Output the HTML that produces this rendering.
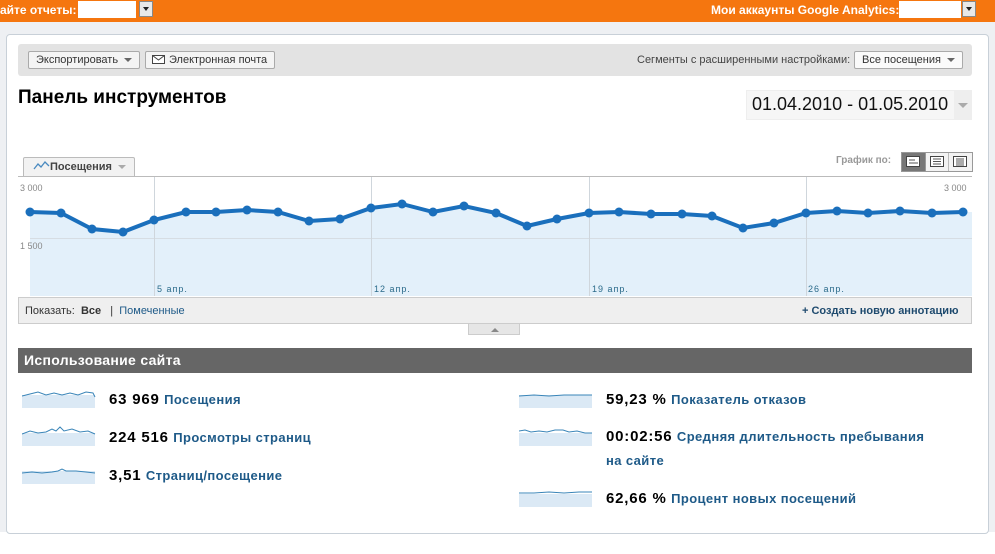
<!DOCTYPE html>
<html><head><meta charset="utf-8"><style>
*{margin:0;padding:0;box-sizing:border-box}
body{width:995px;height:554px;overflow:hidden;background:#fff;font-family:"Liberation Sans",Arial,sans-serif;position:relative}
.a{position:absolute}
.top{left:0;top:0;width:995px;height:22px;background:#f5760f}
.tl{color:#fff;font-weight:bold;font-size:12px;top:3px}
.sel{background:#fff;height:17px;top:1px}
.arr{position:absolute;top:1px;width:14px;height:16px;background:#e8e8e8;border:1px solid #888}
.arr:after{content:"";position:absolute;left:3px;top:5px;border:3px solid transparent;border-top:4px solid #222}
.btn{background:#f4f4f4;border:1px solid #aaa;font-size:11px;color:#333;height:18px;line-height:16px;padding:0 7px;border-radius:2px}
.tri{display:inline-block;border:4px solid transparent;border-top:4px solid #666;vertical-align:-3px;margin-left:6px}
.num{font-weight:bold;font-size:15px;color:#000;letter-spacing:.8px}
.lab{font-weight:bold;font-size:13px;color:#1e5a88;letter-spacing:.4px}
.ax{font-size:9px;color:#2a6a8a;letter-spacing:1px}
</style></head><body>
<div class="a" style="left:0;top:22px;width:995px;height:510px;background:#eef0f3"></div>
<div class="a" style="left:6px;top:34px;width:983px;height:500px;background:#fff;border:1px solid #c8d0d8;border-radius:4px"></div>
<div class="a top"></div>
<div class="a tl" style="left:0">айте отчеты:</div>
<div class="a sel" style="left:78px;width:58px"></div><div class="arr" style="left:139px"></div>
<div class="a tl" style="left:711px">Мои аккаунты Google Analytics:</div>
<div class="a sel" style="left:899px;width:62px"></div><div class="arr" style="left:962px"></div>

<div class="a" style="left:18px;top:44px;width:954px;height:32px;background:#e3e3e3;border-radius:3px"></div>
<div class="a btn" style="left:28px;top:51px">Экспортировать<span class="tri"></span></div>
<div class="a btn" style="left:145px;top:51px;padding-left:6px"><svg width="13" height="9" style="vertical-align:-1px;margin-right:4px"><rect x=".5" y=".5" width="12" height="8" fill="#fff" stroke="#444"/><path d="M.5 .5 6.5 5 12.5 .5" fill="none" stroke="#444"/></svg>Электронная почта</div>
<div class="a" style="left:637px;top:54px;font-size:11px;color:#444">Сегменты с расширенными настройками:</div>
<div class="a btn" style="left:854px;top:51px;background:#fafafa">Все посещения<span class="tri"></span></div>

<div class="a" style="left:18px;top:87px;font-size:19px;font-weight:bold;color:#000">Панель инструментов</div>
<div class="a" style="left:746px;top:90px;width:226px;height:30px;background:#f6f6f6;border:1px solid #eee"></div>
<div class="a" style="left:752px;top:94px;font-size:18px;color:#111">01.04.2010 - 01.05.2010</div>
<div class="a" style="left:954px;top:91px;width:18px;height:28px;background:#eee"><span style="position:absolute;left:4px;top:12px;border:5px solid transparent;border-top:5px solid #aaa"></span></div>

<div class="a" style="left:836px;top:155px;font-size:10px;font-weight:bold;color:#999">График по:</div>
<div class="a" style="left:901px;top:152px;width:72px;height:20px;border:1px solid #999;background:#f3f3f3;display:flex">
<div style="width:24px;background:#777;border-right:1px solid #999"></div><div style="width:23px;border-right:1px solid #bbb"></div><div></div></div>
<svg class="a" style="left:905px;top:155px" width="66" height="14"><g fill="#fff" stroke="#444" stroke-width="1"><rect x="1.5" y="1.5" width="13" height="10"/><rect x="25.5" y="1.5" width="13" height="10"/><rect x="48.5" y="1.5" width="13" height="10"/></g><g stroke="#555"><path d="M4 5h6M4 8h9M28 4h8M28 6.5h8M28 9h8M51 4h8M51 6h8M51 8h8M51 10h8"/></g></svg>

<div class="a" style="left:23px;top:157px;width:112px;height:20px;background:#f2f2f2;border:1px solid #bbb;border-bottom:none;border-radius:2px 2px 0 0;font-size:11px;font-weight:bold;color:#444;padding:3px 0 0 9px"><svg width="17" height="9" style="vertical-align:0"><path d="M1 8 5 3 8 6 12 1 16 5" fill="none" stroke="#4a8ac0" stroke-width="1.3"/></svg>Посещения<span class="tri" style="border-top-color:#aaa"></span></div>

<svg class="a" style="left:18px;top:176px" width="954" height="121">
<line x1="0" y1="0.5" x2="954" y2="0.5" stroke="#bbb"/>
<polygon fill="#e3f0fa" points="12,36 43,37 74,53 105,56 136,44 168,36 198,36 229,34 260,36 291,45 322,43 353,32 384,28 415,36 446,30 478,37 509,50 539,43 571,37 601,36 633,38 664,38 694,40 725,52 756,47 788,37 819,35 850,37 882,35 914,37 945,36 954,36 954,120 12,120"/>
<line x1="12" y1="62.5" x2="954" y2="62.5" stroke="#d6dde3"/>
<g stroke="#cfd6dc"><line x1="136.5" y1="1" x2="136.5" y2="120"/><line x1="353.5" y1="1" x2="353.5" y2="120"/><line x1="571.5" y1="1" x2="571.5" y2="120"/><line x1="788.5" y1="1" x2="788.5" y2="120"/></g>
<polyline fill="none" stroke="#1a6fbc" stroke-width="4" points="12,36 43,37 74,53 105,56 136,44 168,36 198,36 229,34 260,36 291,45 322,43 353,32 384,28 415,36 446,30 478,37 509,50 539,43 571,37 601,36 633,38 664,38 694,40 725,52 756,47 788,37 819,35 850,37 882,35 914,37 945,36"/>
<g fill="#1a6fbc">
<circle cx="12" cy="36" r="4.5"/><circle cx="43" cy="37" r="4.5"/><circle cx="74" cy="53" r="4.5"/><circle cx="105" cy="56" r="4.5"/><circle cx="136" cy="44" r="4.5"/><circle cx="168" cy="36" r="4.5"/><circle cx="198" cy="36" r="4.5"/><circle cx="229" cy="34" r="4.5"/><circle cx="260" cy="36" r="4.5"/><circle cx="291" cy="45" r="4.5"/><circle cx="322" cy="43" r="4.5"/><circle cx="353" cy="32" r="4.5"/><circle cx="384" cy="28" r="4.5"/><circle cx="415" cy="36" r="4.5"/><circle cx="446" cy="30" r="4.5"/><circle cx="478" cy="37" r="4.5"/><circle cx="509" cy="50" r="4.5"/><circle cx="539" cy="43" r="4.5"/><circle cx="571" cy="37" r="4.5"/><circle cx="601" cy="36" r="4.5"/><circle cx="633" cy="38" r="4.5"/><circle cx="664" cy="38" r="4.5"/><circle cx="694" cy="40" r="4.5"/><circle cx="725" cy="52" r="4.5"/><circle cx="756" cy="47" r="4.5"/><circle cx="788" cy="37" r="4.5"/><circle cx="819" cy="35" r="4.5"/><circle cx="850" cy="37" r="4.5"/><circle cx="882" cy="35" r="4.5"/><circle cx="914" cy="37" r="4.5"/><circle cx="945" cy="36" r="4.5"/></g>
</svg>
<div class="a" style="left:20px;top:183px;font-size:9px;color:#888">3 000</div>
<div class="a" style="left:944px;top:183px;font-size:9px;color:#888">3 000</div>
<div class="a" style="left:20px;top:241px;font-size:9px;color:#888">1 500</div>
<div class="a ax" style="left:157px;top:284px">5 апр.</div>
<div class="a ax" style="left:374px;top:284px">12 апр.</div>
<div class="a ax" style="left:592px;top:284px">19 апр.</div>
<div class="a ax" style="left:808px;top:284px">26 апр.</div>

<div class="a" style="left:18px;top:297px;width:954px;height:27px;background:#efefef;border:1px solid #ccc"></div>
<div class="a" style="left:25px;top:305px;font-size:11px;color:#333">Показать: &nbsp;<b>Все</b> &nbsp; | &nbsp;<span style="color:#1e5a88">Помеченные</span></div>
<div class="a" style="left:802px;top:305px;font-size:11px;font-weight:bold;color:#1e4a6e">+ Создать новую аннотацию</div>
<div class="a" style="left:468px;top:324px;width:52px;height:11px;background:#e6e6e6;border:1px solid #ccc;border-top:none"><span style="position:absolute;left:22px;top:0;border:4px solid transparent;border-bottom:4px solid #888"></span></div>

<div class="a" style="left:18px;top:348px;width:954px;height:25px;background:#666;color:#fff;font-weight:bold;font-size:14px;padding:4px 6px;letter-spacing:.3px">Использование сайта</div>

<svg class="a" style="left:22px;top:390px" width="74" height="110">
<g fill="#dbe9f5"><rect x="0" y="5" width="73" height="13"/><rect x="0" y="43" width="73" height="13"/><rect x="0" y="81" width="73" height="13"/></g>
<g fill="none" stroke="#3a85b8" stroke-width="1"><path d="M0 6 8 4 16 2 24 5 32 3 40 5 48 3 56 5 64 2 71 3 73 7"/><path d="M0 44 8 41 16 43 24 42 30 39 34 41 38 37 42 41 50 39 58 42 66 41 73 44"/><path d="M0 83 10 82 20 83 30 82 36 81 40 79 44 81 54 81 64 82 73 83"/></g></svg>
<svg class="a" style="left:519px;top:390px" width="74" height="120">
<g fill="#dbe9f5"><rect x="0" y="5" width="73" height="13"/><rect x="0" y="43" width="73" height="13"/><rect x="0" y="104" width="73" height="13"/></g>
<g fill="none" stroke="#3a85b8" stroke-width="1"><path d="M0 6 15 5 30 6 45 5 60 5 73 5"/><path d="M0 41 6 40 12 42 20 41 28 42 36 40 44 40 50 42 58 41 66 43 73 43"/><path d="M0 103 15 103 30 102 45 103 60 102 73 102"/></g></svg>

<div class="a" style="left:109px;top:391px"><span class="num">63 969</span> <span class="lab">Посещения</span></div>
<div class="a" style="left:109px;top:429px"><span class="num">224 516</span> <span class="lab">Просмотры страниц</span></div>
<div class="a" style="left:109px;top:467px"><span class="num">3,51</span> <span class="lab">Страниц/посещение</span></div>
<div class="a" style="left:606px;top:391px"><span class="num">59,23 %</span> <span class="lab">Показатель отказов</span></div>
<div class="a" style="left:606px;top:429px;width:355px;line-height:24px;margin-top:-4px"><span class="num">00:02:56</span> <span class="lab">Средняя длительность пребывания на&nbsp;сайте</span></div>
<div class="a" style="left:606px;top:490px"><span class="num">62,66 %</span> <span class="lab">Процент новых посещений</span></div>
</body></html>
